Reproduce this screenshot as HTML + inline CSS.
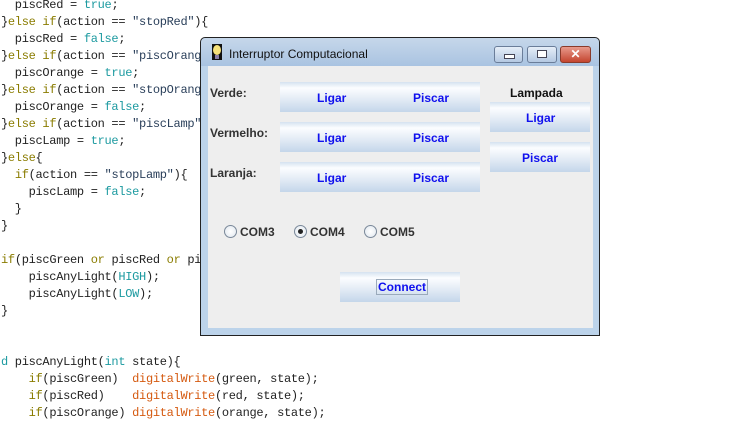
<!DOCTYPE html>
<html><head><meta charset="utf-8"><style>
body{margin:0;width:756px;height:412px;background:#fff;overflow:hidden;position:relative;font-family:"Liberation Sans",sans-serif}
pre{position:absolute;left:1px;top:-3px;margin:0;font-family:"Liberation Mono",monospace;font-size:12px;letter-spacing:-0.3px;line-height:17px;color:#222}
.k{color:#8a7c00}.c{color:#1c9aa0}.s{color:#2a3f5a}.f{color:#d55a10}
.win{position:absolute;left:200px;top:37px;width:398px;height:297px;border:1px solid #222;background:#bcd3ea;border-radius:5px 5px 0 0}
.tb{position:absolute;left:0;top:0;width:398px;height:28px;background:linear-gradient(#c6d7ea,#a9c3e1);border-radius:5px 5px 0 0}
.title{position:absolute;left:28px;top:9px;font-size:12px;color:#111}
.ctl{position:absolute;top:8px;height:15px;border:1px solid #6a7d99;border-radius:3px;background:linear-gradient(#e6eef8,#b4c8e2)}
.content{position:absolute;left:7px;top:28px;width:385px;height:262px;background:#eeeeee}
.btn{position:absolute;height:30px;background:linear-gradient(#d5e2f0 0%,#fbfdff 20%,#e8eff7 50%,#c4d6ea 100%);color:#1010ee;font-weight:bold;font-size:12px}
.btn span{position:absolute;top:9px}
.lbl{position:absolute;font-weight:bold;font-size:12px;color:#333}
.rad{position:absolute;width:11px;height:11px;border:1px solid #7a8899;border-radius:50%;background:radial-gradient(#fff,#dfe6ee)}
</style></head><body>
<pre>  piscRed = <span class="c">true</span>;
}<span class="k">else if</span>(action == <span class="s">"stopRed"</span>){
  piscRed = <span class="c">false</span>;
}<span class="k">else if</span>(action == <span class="s">"piscOrange"</span>){
  piscOrange = <span class="c">true</span>;
}<span class="k">else if</span>(action == <span class="s">"stopOrange"</span>){
  piscOrange = <span class="c">false</span>;
}<span class="k">else if</span>(action == <span class="s">"piscLamp"</span>){
  piscLamp = <span class="c">true</span>;
}<span class="k">else</span>{
  <span class="k">if</span>(action == <span class="s">"stopLamp"</span>){
    piscLamp = <span class="c">false</span>;
  }
}

<span class="k">if</span>(piscGreen <span class="k">or</span> piscRed <span class="k">or</span> piscOrange){
    piscAnyLight(<span class="c">HIGH</span>);
    piscAnyLight(<span class="c">LOW</span>);
}


<span class="c">d</span> piscAnyLight(<span class="c">int</span> state){
    <span class="k">if</span>(piscGreen)  <span class="f">digitalWrite</span>(green, state);
    <span class="k">if</span>(piscRed)    <span class="f">digitalWrite</span>(red, state);
    <span class="k">if</span>(piscOrange) <span class="f">digitalWrite</span>(orange, state);</pre>
<div class="win">
 <div class="tb">
  <svg style="position:absolute;left:11px;top:6px" width="10" height="16"><rect x="0" y="0" width="10" height="16" fill="#111"/><ellipse cx="5" cy="6" rx="4" ry="5" fill="#f6e27a"/><rect x="3" y="11" width="4" height="4" fill="#8a7fa8"/></svg>
  <div class="title">Interruptor Computacional</div>
  <div class="ctl" style="left:293px;width:27px"><div style="position:absolute;left:9px;top:7px;width:9px;height:3px;border:1px solid #445;background:#fff"></div></div>
  <div class="ctl" style="left:326px;width:28px"><div style="position:absolute;left:9px;top:3px;width:8px;height:6px;border:1px solid #445;background:#fff"></div></div>
  <div class="ctl" style="left:359px;width:29px;background:linear-gradient(#e89a8c,#c4452f);border-color:#8a3a2a;color:#fff;font-weight:bold;font-size:12px;text-align:center;line-height:15px">✕</div>
 </div>
 <div class="content">
  <div class="lbl" style="left:2px;top:20px">Verde:</div>
  <div class="lbl" style="left:2px;top:60px">Vermelho:</div>
  <div class="lbl" style="left:2px;top:100px">Laranja:</div>
  <div class="btn" style="left:72px;top:16px;width:200px"><span style="left:37px">Ligar</span><span style="left:133px">Piscar</span></div>
  <div class="btn" style="left:72px;top:56px;width:200px"><span style="left:37px">Ligar</span><span style="left:133px">Piscar</span></div>
  <div class="btn" style="left:72px;top:96px;width:200px"><span style="left:37px">Ligar</span><span style="left:133px">Piscar</span></div>
  <div class="lbl" style="left:302px;top:20px;color:#111">Lampada</div>
  <div class="btn" style="left:282px;top:36px;width:100px"><span style="left:36px">Ligar</span></div>
  <div class="btn" style="left:282px;top:76px;width:100px"><span style="left:32px">Piscar</span></div>
  <div class="rad" style="left:16px;top:159px"></div><div class="lbl" style="left:32px;top:159px">COM3</div>
  <div class="rad" style="left:86px;top:159px"><div style="position:absolute;left:3px;top:3px;width:5px;height:5px;border-radius:50%;background:#222"></div></div><div class="lbl" style="left:102px;top:159px">COM4</div>
  <div class="rad" style="left:156px;top:159px"></div><div class="lbl" style="left:172px;top:159px">COM5</div>
  <div class="btn" style="left:132px;top:206px;width:120px"><span style="left:36px;top:7px;border:1px solid #9aaabb;padding:0 1px;line-height:14px">Connect</span></div>
 </div>
</div>
</body></html>
